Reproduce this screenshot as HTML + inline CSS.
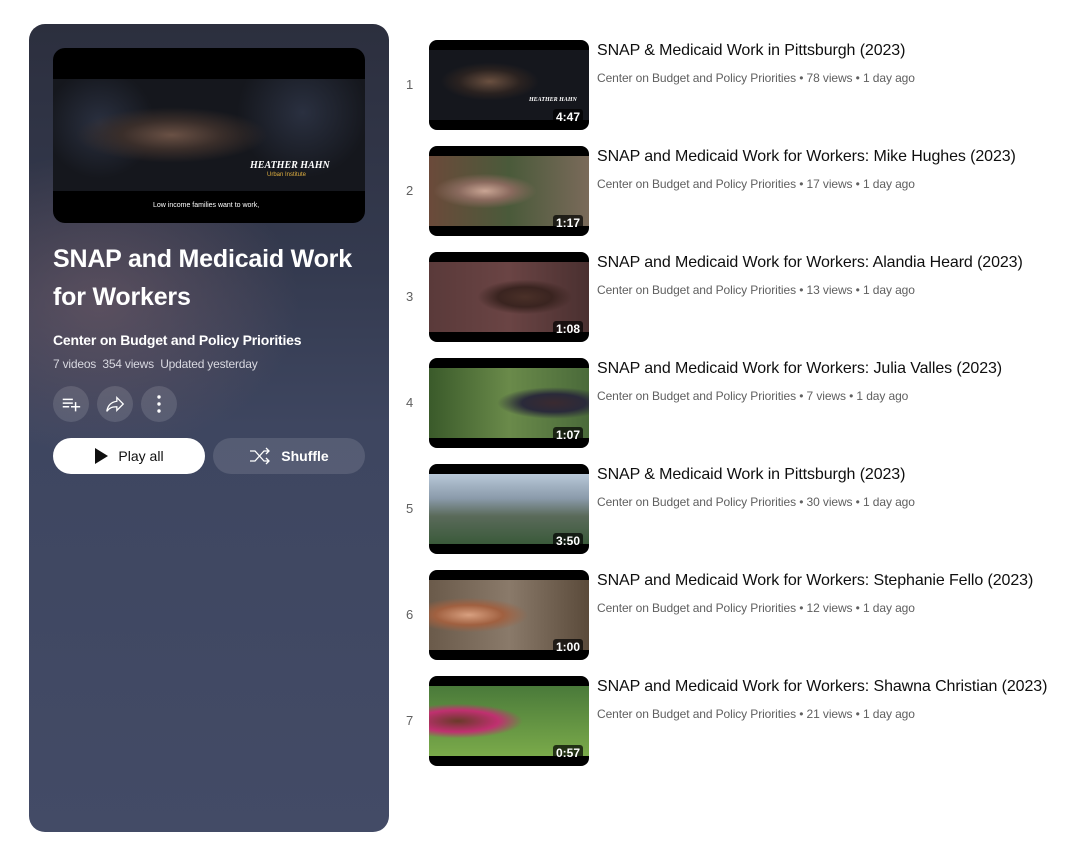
<!DOCTYPE html>
<html><head><style>
*{margin:0;padding:0;box-sizing:border-box}
body{width:1078px;height:854px;background:#fff;font-family:"Liberation Sans",Arial,sans-serif;position:relative;overflow:hidden}
.panel{position:absolute;left:29px;top:24px;width:360px;height:808px;border-radius:16px;background:linear-gradient(180deg,#2c2f3e 0%,#343a4f 30%,#3e4660 50%,#434b66 100%);overflow:hidden}
.glow{position:absolute;left:-100px;top:50px;width:560px;height:450px;background:radial-gradient(ellipse 200px 150px at 170px 230px,rgba(120,95,105,.55),rgba(0,0,0,0))}
.hero{position:absolute;left:24px;top:24px;width:312px;height:175px;border-radius:12px;background:#000;overflow:hidden}
.hero .img{position:absolute;left:0;top:31px;width:312px;height:112px;background:radial-gradient(ellipse at 38% 50%,#6a5145 0,#3a2e2a 18%,rgba(0,0,0,0) 35%),radial-gradient(circle at 15% 40%,#2a3040,rgba(0,0,0,0) 20%),radial-gradient(circle at 80% 30%,#2a3040,rgba(0,0,0,0) 25%),#15171d}
.title{position:absolute;left:24px;top:216px;color:#fff;font-size:25px;font-weight:bold;line-height:38px;width:330px;letter-spacing:-0.2px}
.ch{position:absolute;left:24px;top:308px;color:#fff;font-size:14px;font-weight:bold;letter-spacing:-0.2px}
.meta{position:absolute;left:24px;top:333px;color:#d8d8e0;font-size:12px;letter-spacing:-0.2px}
.ib{position:absolute;top:362px;width:36px;height:36px;border-radius:50%;background:rgba(255,255,255,.12);display:flex;align-items:center;justify-content:center}
.btn{position:absolute;top:414px;width:152px;height:36px;border-radius:18px;display:flex;align-items:center;justify-content:center;font-size:14px;gap:10px}
.row{position:absolute;left:400px;height:90px;width:670px}
.num{position:absolute;left:6px;top:37px;font-size:13px;color:#606060}
.th{position:absolute;left:29px;top:0;width:160px;height:90px;border-radius:8px;overflow:hidden;background:#000}
.th .im{position:absolute;left:0;top:10px;width:160px;height:70px}
.dur{position:absolute;right:6px;bottom:5px;color:#fff;font-size:12px;font-weight:bold;background:rgba(0,0,0,.7);padding:1px 3px;border-radius:3px}
.t{position:absolute;left:197px;top:2px;font-size:16px;color:#0f0f0f;white-space:nowrap;letter-spacing:-0.1px}
.s{position:absolute;left:197px;top:31px;font-size:12px;color:#606060;white-space:nowrap;letter-spacing:-0.1px}
</style></head><body>
<div class="panel">
 <div class="glow"></div>
 <div class="hero"><div class="img"></div>
  <div style="position:absolute;left:197px;top:112px;color:#fff;font:italic bold 10px 'Liberation Serif',serif">HEATHER HAHN</div>
  <div style="position:absolute;left:214px;top:124px;color:#e0b040;font-size:6px">Urban Institute</div>
  <div style="position:absolute;left:100px;top:154px;color:#fff;font-size:7px">Low income families want to work,</div>
 </div>
 <div class="title">SNAP and Medicaid Work for Workers</div>
 <div class="ch">Center on Budget and Policy Priorities</div>
 <div class="meta">7 videos&nbsp; 354 views&nbsp; Updated yesterday</div>
 <div class="ib" style="left:24px"><svg width="22" height="22" viewBox="0 0 24 24" fill="none" stroke="#fff" stroke-width="1.6"><path d="M3 7h11M3 11h11M3 15h7M17 10v10M12 15h10"/></svg></div>
 <div class="ib" style="left:68px"><svg width="22" height="22" viewBox="0 0 24 24" fill="none" stroke="#fff" stroke-width="1.4"><path d="M14 5l7 7-7 7v-4c-5 0-8 1-11 5 1-6 4-10 11-11z"/></svg></div>
 <div class="ib" style="left:112px"><svg width="4" height="18" viewBox="0 0 4 18" fill="#fff"><circle cx="2" cy="2" r="1.7"/><circle cx="2" cy="9" r="1.7"/><circle cx="2" cy="16" r="1.7"/></svg></div>
 <div class="btn" style="left:24px;background:#fff;color:#0f0f0f"><svg width="14" height="16" viewBox="0 0 14 16"><path d="M1 0l13 8-13 8z" fill="#0f0f0f"/></svg>Play all</div>
 <div class="btn" style="left:184px;background:rgba(255,255,255,.12);color:#fff;font-weight:bold"><svg width="22" height="18" viewBox="0 0 22 18" fill="none" stroke="#fff" stroke-width="1.3"><path d="M1 4h5l9 10h5M1 14h5l9-10h5M17 1l3 3-3 3M17 11l3 3-3 3"/></svg>Shuffle</div>
</div>

<div class="row" style="top:40px"><div class="num">1</div><div class="th"><div class="im" style="background:radial-gradient(ellipse at 38% 45%,#6a5040 0,#2a2220 22%,rgba(0,0,0,0) 35%),#15171d"></div><div style="position:absolute;left:100px;top:57px;color:#fff;font:italic bold 6px serif">HEATHER HAHN</div><div class="dur">4:47</div></div><div class="t">SNAP &amp; Medicaid Work in Pittsburgh (2023)</div><div class="s">Center on Budget and Policy Priorities • 78 views • 1 day ago</div></div>
<div class="row" style="top:146px"><div class="num">2</div><div class="th"><div class="im" style="background:radial-gradient(ellipse at 35% 50%,#c9a594 0,#8a6a5e 18%,rgba(0,0,0,0) 35%),linear-gradient(90deg,#6b4a3a,#4a5a3a 50%,#7a6a5a)"></div><div class="dur">1:17</div></div><div class="t">SNAP and Medicaid Work for Workers: Mike Hughes (2023)</div><div class="s">Center on Budget and Policy Priorities • 17 views • 1 day ago</div></div>
<div class="row" style="top:252px"><div class="num">3</div><div class="th"><div class="im" style="background:radial-gradient(ellipse at 60% 50%,#4a3028 0,#3a2420 20%,rgba(0,0,0,0) 35%),linear-gradient(90deg,#5a3a3a,#6a4444 50%,#4a3030)"></div><div class="dur">1:08</div></div><div class="t">SNAP and Medicaid Work for Workers: Alandia Heard (2023)</div><div class="s">Center on Budget and Policy Priorities • 13 views • 1 day ago</div></div>
<div class="row" style="top:358px"><div class="num">4</div><div class="th"><div class="im" style="background:radial-gradient(ellipse at 78% 50%,#3a2a30 0,#2a2a3a 18%,rgba(0,0,0,0) 32%),linear-gradient(90deg,#3a5a2a,#6a8a4a 50%,#4a6a3a)"></div><div class="dur">1:07</div></div><div class="t">SNAP and Medicaid Work for Workers: Julia Valles (2023)</div><div class="s">Center on Budget and Policy Priorities • 7 views • 1 day ago</div></div>
<div class="row" style="top:464px"><div class="num">5</div><div class="th"><div class="im" style="background:linear-gradient(180deg,#b8c8d8 0,#8a9aaa 35%,#5a6a5a 60%,#3a5a3a 100%)"></div><div class="dur">3:50</div></div><div class="t">SNAP &amp; Medicaid Work in Pittsburgh (2023)</div><div class="s">Center on Budget and Policy Priorities • 30 views • 1 day ago</div></div>
<div class="row" style="top:570px"><div class="num">6</div><div class="th"><div class="im" style="background:radial-gradient(ellipse at 25% 50%,#d8a080 0,#a06040 20%,rgba(0,0,0,0) 35%),linear-gradient(90deg,#6a5a4a,#8a7a6a 50%,#5a4a3a)"></div><div class="dur">1:00</div></div><div class="t">SNAP and Medicaid Work for Workers: Stephanie Fello (2023)</div><div class="s">Center on Budget and Policy Priorities • 12 views • 1 day ago</div></div>
<div class="row" style="top:676px"><div class="num">7</div><div class="th"><div class="im" style="background:radial-gradient(ellipse at 18% 50%,#6a3a2a 0,#c03070 22%,rgba(0,0,0,0) 35%),linear-gradient(180deg,#4a7a3a,#7aaa4a)"></div><div class="dur">0:57</div></div><div class="t">SNAP and Medicaid Work for Workers: Shawna Christian (2023)</div><div class="s">Center on Budget and Policy Priorities • 21 views • 1 day ago</div></div>
</body></html>
